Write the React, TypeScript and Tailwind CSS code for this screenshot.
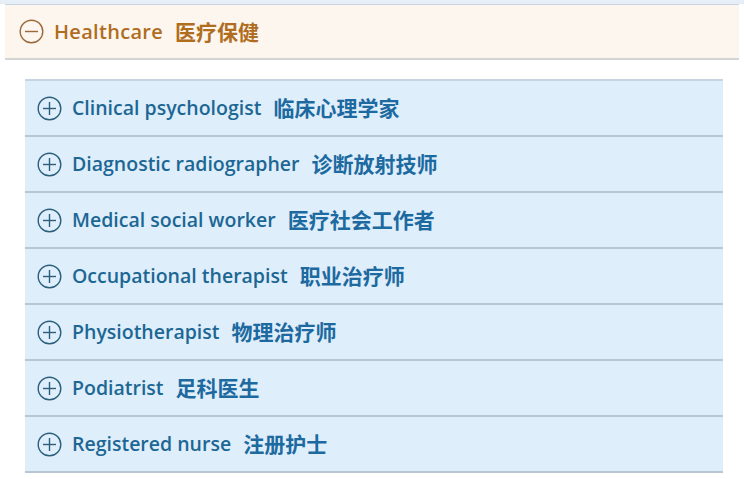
const items = [
  ["Clinical psychologist", "临床心理学家"],
  ["Diagnostic radiographer", "诊断放射技师"],
  ["Medical social worker", "医疗社会工作者"],
  ["Occupational therapist", "职业治疗师"],
  ["Physiotherapist", "物理治疗师"],
  ["Podiatrist", "足科医生"],
  ["Registered nurse", "注册护士"],
];

const CircleIcon = ({ plus, color }: { plus?: boolean; color: string }) => (
  <svg width="25" height="25" viewBox="0 0 25 25" fill="none" stroke={color} strokeWidth="1.4">
    <circle cx="12.5" cy="12.5" r="11.3" />
    <path d="M6 12.5h13" />
    {plus && <path d="M12.5 6v13" />}
  </svg>
);

export default function App() {
  return (
    <div className="w-[744px] h-[479px] bg-white overflow-hidden font-['Open_Sans','Noto_Sans_CJK_SC',sans-serif]">
      <div className="h-[4px] bg-[#e6eef8]" />
      <div className="mx-[5px] h-[56px] bg-[#fdf6ee] border-t border-b-2 border-[#d4d4d4] border-t-[#c9d3de] flex items-center pl-[14px]">
        <CircleIcon color="#9a6a3c" />
        <span className="ml-[10px] text-[20px] font-semibold text-[#b06d1e] tracking-[0.3px]">Healthcare</span>
        <span className="ml-[12px] text-[21px] font-bold text-[#b06d1e] font-['Noto_Sans_CJK_SC',sans-serif]">医疗保健</span>
      </div>
      <div className="mt-[19px] ml-[25px] w-[698px] border-t-2 border-[#c8d4df]">
        {items.map(([en, zh]) => (
          <div key={en} className="h-[56px] bg-[#dfeefb] border-b-2 border-[#bac7d3] flex items-center pl-[12px]">
            <CircleIcon plus color="#2d5f7c" />
            <span className="ml-[10px] text-[19.5px] font-semibold text-[#1c6794]">{en}</span>
            <span className="ml-[12px] text-[21px] font-bold text-[#1c6aa0] font-['Noto_Sans_CJK_SC',sans-serif]">{zh}</span>
          </div>
        ))}
      </div>
    </div>
  );
}
